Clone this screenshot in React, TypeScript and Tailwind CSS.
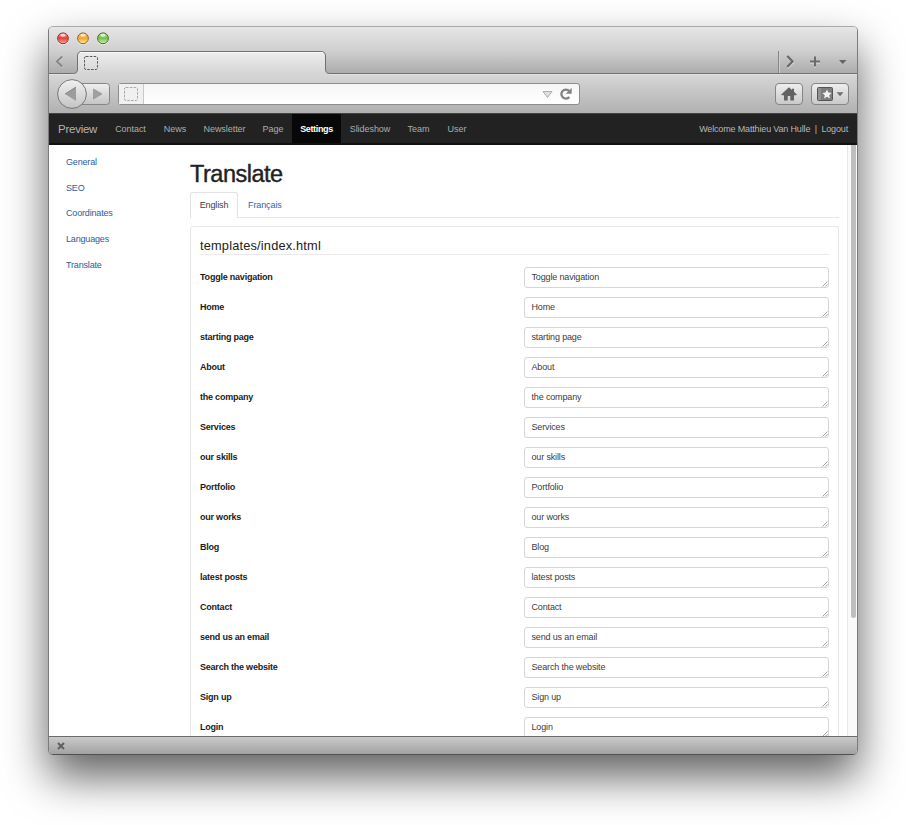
import React from "react";

const NAV = [
  { label: "Contact", box: "w-[49px]" },
  { label: "News", box: "w-[40px]" },
  { label: "Newsletter", box: "w-[59px]" },
  { label: "Page", box: "w-[38px]" },
  { label: "Settings", box: "w-[49px]", active: true },
  { label: "Slideshow", box: "w-[58px]" },
  { label: "Team", box: "w-[39px]" },
  { label: "User", box: "w-[38px]" },
];

const SIDE = ["General", "SEO", "Coordinates", "Languages", "Translate"];

const ROWS = [
  "Toggle navigation",
  "Home",
  "starting page",
  "About",
  "the company",
  "Services",
  "our skills",
  "Portfolio",
  "our works",
  "Blog",
  "latest posts",
  "Contact",
  "send us an email",
  "Search the website",
  "Sign up",
  "Login",
];

function Light({ tone, id }: { tone: string[]; id: string }) {
  return (
    <svg width="13" height="13" viewBox="0 0 13 13">
      <defs>
        <linearGradient id={id} x1="0" y1="0" x2="0" y2="1">
          <stop offset="0" stopColor={tone[0]} />
          <stop offset="0.5" stopColor={tone[1]} />
          <stop offset="1" stopColor={tone[2]} />
        </linearGradient>
      </defs>
      <circle cx="7" cy="6.9" r="6" fill="#fff" opacity="0.5" />
      <circle cx="7" cy="6.3" r="5.4" fill={`url(#${id})`} stroke={tone[3]} strokeWidth="1" />
      <ellipse cx="7" cy="3.2" rx="2.6" ry="1.5" fill="#fff" opacity="0.7" />
    </svg>
  );
}

function Placeholder({ color }: { color: string }) {
  return (
    <svg width="14" height="14" viewBox="0 0 14 14" fill="none">
      <rect x="0.5" y="0.5" width="13" height="13" rx="1.5" stroke={color} strokeDasharray="2.6 1.2" />
    </svg>
  );
}

function TabStrip() {
  return (
    <div className="relative flex h-[48px] flex-col bg-linear-to-b from-[#e6e6e6] via-[#cfcfcf] to-[#a9a9a9]">
      <svg className="absolute left-0 top-0" width="808" height="48" viewBox="0 0 808 48">
        <defs>
          <linearGradient id="tab" x1="0" y1="25" x2="0" y2="48" gradientUnits="userSpaceOnUse">
            <stop offset="0" stopColor="#ededed" />
            <stop offset="1" stopColor="#d4d4d4" />
          </linearGradient>
        </defs>
        <path
          d="M0 46.5H24.5Q28.5 46.5 28.5 42V29Q28.5 24.5 33 24.5H272Q276.5 24.5 276.5 29V42Q276.5 46.5 280.5 46.5H808V48H0Z"
          fill="url(#tab)"
        />
        <path
          d="M0 46.5H24.5Q28.5 46.5 28.5 42V29Q28.5 24.5 33 24.5H272Q276.5 24.5 276.5 29V42Q276.5 46.5 280.5 46.5H808"
          fill="none"
          stroke="#707070"
        />
        <path d="M31 25.5H274" stroke="#f8f8f8" />
        <path d="M0 47.5H25M280 47.5H808" stroke="#e2e2e2" />
        <path d="M729.5 24V46" stroke="#858585" />
        <path d="M730.5 24V46" stroke="#cfcfcf" />
      </svg>
      <div className="relative flex h-[22px] items-center gap-[7px] pl-[7px]">
        <Light id="r" tone={["#f2968f", "#ea3f3f", "#ffaaa0", "#8f3432"]} />
        <Light id="y" tone={["#f4c070", "#f3a730", "#fff09a", "#946428"]} />
        <Light id="g" tone={["#a9d890", "#79c04f", "#d2f7a0", "#44702f"]} />
      </div>
      <div className="relative flex h-[24px] items-center">
        <svg className="ml-[6px]" width="9" height="13" viewBox="0 0 9 13" fill="none">
          <path d="M7.8 2.2L2.3 7.2L7.8 12.2" stroke="#dcdcdc" strokeWidth="1.4" />
          <path d="M7.3 1.5L1.8 6.5L7.3 11.5" stroke="#858585" strokeWidth="1.8" />
        </svg>
        <div className="ml-[20px] mt-[4px] flex">
          <Placeholder color="#5c5c5c" />
        </div>
        <svg className="ml-auto" width="76" height="15" viewBox="0 0 76 15" fill="none">
          <g transform="translate(0 1)" stroke="#e0e0e0">
            <path d="M6.6 2L12 7.5L6.6 13" strokeWidth="2" />
            <path d="M29 7.5H39M34 2.5V12.5" strokeWidth="2" />
          </g>
          <path d="M6.3 2L11.5 7.5L6.3 13" stroke="#686868" strokeWidth="2.2" />
          <path d="M29 7.5H39M34 2.5V12.5" stroke="#6c6c6c" strokeWidth="2" />
          <path d="M58 6H65.5L61.75 10Z" fill="#666" />
        </svg>
      </div>
    </div>
  );
}

function Toolbar() {
  return (
    <div className="flex h-[38px] items-center bg-linear-to-b from-[#d6d6d6] to-[#b1b1b1]">
      <svg className="ml-[7px]" width="56" height="32" viewBox="0 0 56 32">
        <defs>
          <linearGradient id="btn" x1="0" y1="0" x2="0" y2="1">
            <stop offset="0" stopColor="#f0f0f0" />
            <stop offset="1" stopColor="#c4c4c4" />
          </linearGradient>
        </defs>
        <path d="M24 5.5H50.5Q53.5 5.5 53.5 8.5V23.5Q53.5 26.5 50.5 26.5H24Z" fill="url(#btn)" stroke="#858585" />
        <circle cx="16" cy="16" r="14.4" fill="url(#btn)" stroke="#777" />
        <path d="M9 16L20 9V23Z" fill="#9c9c9c" />
        <path d="M20 9L9 16" stroke="#777" strokeWidth="0.8" />
        <path d="M37.5 11L46 16L37.5 21Z" fill="#a0a0a0" stroke="#8c8c8c" strokeWidth="0.6" />
      </svg>
      <div className="ml-[6px] flex h-[22px] w-[462px] items-center rounded-[3px] border border-[#8d8d8d] bg-linear-to-b from-[#f5f5f5] to-white">
        <div className="flex h-full w-[25px] items-center border-r border-[#c9c9c9] bg-[#f0f0f0] pl-[5px]">
          <Placeholder color="#aaaaaa" />
        </div>
        <svg className="ml-auto mr-[4px]" width="34" height="16" viewBox="0 0 34 16" fill="none">
          <path d="M2 5.5H11L6.5 11.5Z" fill="#dedede" stroke="#a8a8a8" strokeWidth="0.9" />
          <path d="M28 4.8A4.5 4.5 0 1 0 28.3 11" stroke="#818181" strokeWidth="2.3" />
          <path d="M24.7 7.8H30.7V2Z" fill="#818181" />
        </svg>
      </div>
      <div className="ml-auto flex h-[22px] w-[28px] items-center justify-center rounded-[4px] border border-[#858585] bg-linear-to-b from-[#eeeeee] to-[#cacaca]">
        <svg className="-mt-px" width="16" height="14" viewBox="0 0 16 14">
          <path d="M8 0.3L11 3V1.8H13V4.8L15.8 7.6L15 8.3H13V13.5H9.3V9H6.7V13.5H3V8.3H1L0.2 7.6Z" fill="#626262" />
        </svg>
      </div>
      <div className="ml-[8px] mr-[8px] flex h-[22px] w-[38px] items-center justify-center rounded-[4px] border border-[#858585] bg-linear-to-b from-[#eeeeee] to-[#cacaca]">
        <svg width="28" height="14" viewBox="0 0 28 14">
          <rect x="1.5" y="0.5" width="15" height="13" rx="1" fill="#7d7d7d" stroke="#555" />
          <path d="M2 1H5V13H2Z" fill="#929292" />
          <path d="M11 2.5L12.4 5.6L15.7 5.9L13.2 8.2L14 11.5L11 9.8L8 11.5L8.8 8.2L6.3 5.9L9.6 5.6Z" fill="#f2f2f2" />
          <path d="M20.5 5.2H27.5L24 9.2Z" fill="#6e6e6e" />
        </svg>
      </div>
    </div>
  );
}

function NavBar() {
  return (
    <nav className="flex h-[32px] border-b-2 border-t border-b-[#111] border-t-[#444] bg-[#222] text-[9px] leading-[31px] text-[#adadad]">
      <span className="w-[57px] pl-[9px] text-[11.5px] tracking-[-0.25px] text-[#b4b4b4]">Preview</span>
      {NAV.map((n) => (
        <a
          key={n.label}
          className={`${n.box} whitespace-nowrap text-center ${n.active ? "bg-[#080808] font-bold tracking-[-0.35px] text-white" : "tracking-[-0.05px]"}`}
        >
          {n.label}
        </a>
      ))}
      <span className="ml-auto pr-[9px] tracking-[-0.16px] text-[#b6b6b6]">
        Welcome Matthieu Van Hulle<span className="mx-[4.5px]">|</span>Logout
      </span>
    </nav>
  );
}

function Row({ label }: { label: string }) {
  return (
    <div className="mb-[9px] flex h-[21px] items-center text-[9px]">
      <label className="w-[324px] pt-px font-bold tracking-[-0.22px] text-[#1c1c1c]">{label}</label>
      <div className="relative flex h-[21px] w-[305px] items-center ml-px rounded-[3px] border border-[#d6d6d6] pl-[6px] pt-px tracking-[-0.15px] text-[#3c3c3c]">
        {label}
        <svg className="absolute bottom-0 right-0" width="6" height="6" viewBox="0 0 6 6">
          <path d="M0.5 5.5L5.5 0.5M3.3 5.5L5.5 3.3" stroke="#999" strokeWidth="0.9" />
        </svg>
      </div>
    </div>
  );
}

export default function App() {
  return (
    <div className="h-[825px] w-[906px] overflow-hidden bg-white pl-[48px] pt-[26px] font-['Liberation_Sans',Arial,sans-serif]">
      <div className="flex h-[729px] w-[810px] flex-col overflow-hidden rounded-[5px] border border-b-[#505050] border-l-[#7b7b7b] border-r-[#7b7b7b] border-t-[#aaa] bg-white shadow-[0_22px_44px_rgba(0,0,0,0.62)]">
        <TabStrip />
        <Toolbar />
        <NavBar />
        <div className="flex h-[591px] overflow-hidden">
          <aside className="flex w-[141px] flex-col pl-[17px] pt-[5px] text-[9px] leading-[25.7px] tracking-[-0.17px] text-[#2a5d9f]">
            {SIDE.map((s) => (
              <a key={s}>{s}</a>
            ))}
          </aside>
          <main className="w-[649px] shrink-0">
            <h1 className="mt-[15px] h-[32px] text-[23.5px] leading-[29px] tracking-[-0.5px] text-[#222] [-webkit-text-stroke:0.4px_#222]">
              Translate
            </h1>
            <div className="flex h-[26px] border-b border-[#e6e6e6] text-[9px] leading-[25px]">
              <a className="h-[26px] w-[48px] rounded-t-[3px] border border-b-0 border-[#e2e2e2] bg-white text-center tracking-[-0.15px] text-[#404040]">
                English
              </a>
              <a className="pl-[10px] pt-px tracking-[-0.1px] text-[#2a66b0]">Français</a>
            </div>
            <section className="mt-[8px] h-[560px] rounded-t-[3px] border border-b-0 border-[#e8e8e8] px-[9px]">
              <h2 className="mb-[12px] mt-[9px] h-[19px] border-b border-[#eaeaea] text-[12.8px] leading-[19px] tracking-[0.18px] text-[#222]">
                templates/index.html
              </h2>
              {ROWS.map((r) => (
                <Row key={r} label={r} />
              ))}
            </section>
          </main>
          <div className="ml-auto h-full w-[10px] border-l border-[#e8e8e8] bg-[#fafafa] pl-[3px]">
            <div className="h-[473px] w-[5px] rounded-b-[3px] bg-[#bebebe]" />
          </div>
        </div>
        <footer className="flex flex-1 items-center border-t border-[#6b6b6b] bg-linear-to-b from-[#cacaca] to-[#a2a2a2] pl-[8px]">
          <svg width="8" height="8" viewBox="0 0 8 8">
            <path d="M1 1L7 7M7 1L1 7" stroke="#606060" strokeWidth="2" />
          </svg>
        </footer>
      </div>
    </div>
  );
}
